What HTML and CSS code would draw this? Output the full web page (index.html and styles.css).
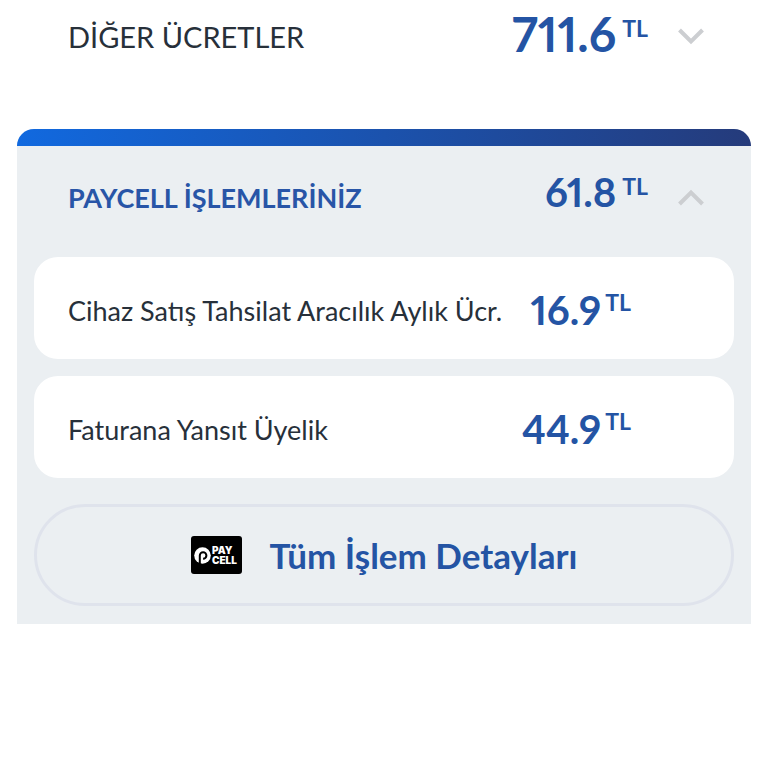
FILE: index.html
```html
<!DOCTYPE html>
<html lang="tr">
<head>
<meta charset="utf-8">
<meta name="viewport" content="width=device-width, initial-scale=1">
<title>Fatura</title>
<link rel="stylesheet" href="styles.css">
</head>
<body>
<main>
  <button class="row other" type="button" aria-expanded="false">
    <span class="title">DİĞER ÜCRETLER</span>
    <span class="price big">711.6<span class="unit">TL</span></span>
    <svg class="chevron" viewBox="0 0 28 18" aria-hidden="true"><path d="M2.500 3l11.500 11.500L25.500 3"/></svg>
  </button>
  <section class="panel">
    <button class="row head" type="button" aria-expanded="true">
      <span class="title strong">PAYCELL İŞLEMLERİNİZ</span>
      <span class="price">61.8<span class="unit">TL</span></span>
      <svg class="chevron" viewBox="0 0 28 18" aria-hidden="true"><path d="M2.500 15L14 3.500 25.500 15"/></svg>
    </button>
    <ul class="items">
      <li class="item"><span class="name">Cihaz Satış Tahsilat Aracılık Aylık Ücr.</span><span class="price">16.9<span class="unit">TL</span></span></li>
      <li class="item"><span class="name">Faturana Yansıt Üyelik</span><span class="price">44.9<span class="unit">TL</span></span></li>
    </ul>
    <a class="details" href="#">
      <svg class="logo" viewBox="0 0 51 38" aria-hidden="true">
        <rect width="51" height="38" rx="3"/>
        <circle class="disc" cx="11.500" cy="19.500" r="8.300"/>
        <path class="mark" d="M8.800 28.500v-9a3.300 3.300 0 1 1 3.300 3.300"/>
        <text><tspan x="21" y="18">PAY</tspan><tspan x="21" y="28">CELL</tspan></text>
      </svg>
      <span>Tüm İşlem Detayları</span>
    </a>
  </section>
</main>
</body>
</html>
```
FILE: styles.css
```css
* { box-sizing: border-box; }
body { margin: 0; background: #fff; color: #27303a; font-family: Lato, sans-serif; }
main { padding: 0 17px; }
button { border: 0; background: none; font: inherit; color: inherit; text-align: left; cursor: pointer; }
.row { display: flex; align-items: center; width: 100%; padding: 0 46px 0 51px; }
.other { height: 72px; }
.title { flex: 1; font-size: 29px; white-space: nowrap; }
.strong { color: #2855a7; font-weight: 700; font-size: 27px; }
.price { display: flex; align-items: flex-start; gap: 6px; color: #2454a4; font-weight: 700; font-size: 40px; line-height: 48px; font-variant-numeric: proportional-nums; }
.big { font-size: 48px; }
.unit { font-size: 23px; line-height: 32px; }
.row .unit { line-height: 36px; }
.chevron { flex: none; width: 28px; height: 18px; margin-left: 29px; fill: none; stroke: #ccced1; stroke-width: 4; }
.panel { margin-top: 57px; padding-bottom: 18px; background: #ebeff2; border-radius: 17px 17px 0 0; overflow: hidden; }
.panel::before { content: ""; display: block; height: 17px; background: linear-gradient(90deg, #1169df, #253b7b); }
.head { height: 111px; padding-bottom: 8px; }
.row .price { padding-bottom: 4px; }
.head .price { padding-bottom: 12px; }
.items { margin: 0; padding: 0 17px; list-style: none; display: grid; gap: 17px; }
.item { display: flex; align-items: center; justify-content: space-between; height: 102px; padding: 4px 103px 0 34px; background: #fff; border-radius: 24px; }
.item .price { gap: 4px; }
.name { font-size: 27px; white-space: nowrap; }
.details { display: flex; align-items: center; justify-content: center; gap: 28px; height: 102px; margin: 26px 17px 0; border: 3px solid #dfe3ec; border-radius: 51px; color: #2454a4; font-size: 35px; font-weight: 700; text-decoration: none; }
.logo { flex: none; width: 51px; height: 38px; }
.logo text { fill: #fff; font: 900 10px Inter, sans-serif; }
.disc { fill: #fff; }
.mark { fill: none; stroke: #000; stroke-width: 2; }
```
